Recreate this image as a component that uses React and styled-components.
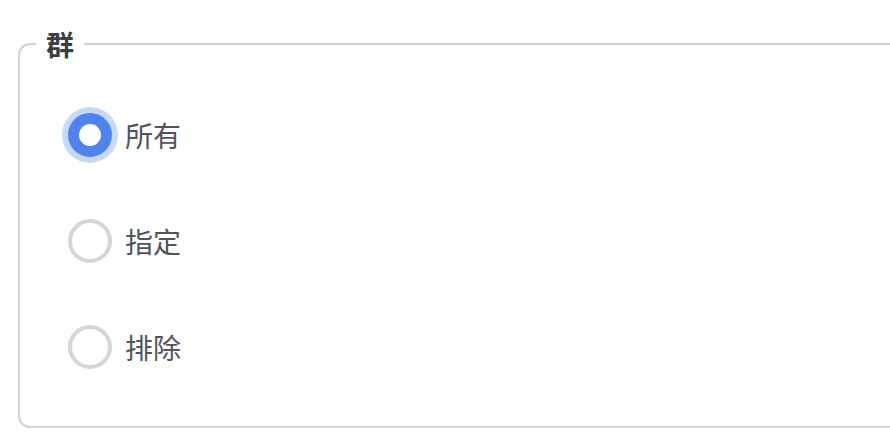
import React, { useState } from 'react';
import styled, { createGlobalStyle } from 'styled-components';

const GlobalStyle = createGlobalStyle`
  html, body {
    margin: 0;
    padding: 0;
    background: #fff;
    font-family: "Noto Sans CJK SC", "Noto Sans", sans-serif;
  }
`;

const Page = styled.div`
  padding: 28px 0 0 18px;
  width: 900px;
`;

const Group = styled.fieldset`
  margin: 0;
  padding: 53px 0 57px 0;
  border: 2px solid #d2d2d2;
  border-right: none;
  border-radius: 12px 0 0 12px;
`;

const Legend = styled.legend`
  margin-left: 16px;
  padding: 0 10px;
  font-size: 28px;
  font-weight: 700;
  line-height: 32px;
  color: #3a3f45;
`;

const List = styled.div`
  display: flex;
  flex-direction: column;
  gap: 62px;
  padding-left: 48px;
`;

const Option = styled.label`
  display: flex;
  align-items: center;
  gap: 13px;
  height: 44px;
  font-size: 28px;
  color: #50555b;
  cursor: pointer;
`;

const Radio = styled.input.attrs({ type: 'radio' })`
  appearance: none;
  margin: 0;
  width: 44px;
  height: 44px;
  box-sizing: border-box;
  border-radius: 50%;
  border: 4px solid #d3d7dc;
  background: #fff;
  cursor: pointer;

  &:checked {
    border: 11px solid #4f84ee;
    box-shadow: 0 0 0 6px #c5dafb;
  }
`;

const options = ['所有', '指定', '排除'];

export default function App() {
  const [value, setValue] = useState('所有');
  return (
    <Page>
      <GlobalStyle />
      <Group>
        <Legend>群</Legend>
        <List>
          {options.map((opt) => (
            <Option key={opt}>
              <Radio name="group" checked={value === opt} onChange={() => setValue(opt)} />
              {opt}
            </Option>
          ))}
        </List>
      </Group>
    </Page>
  );
}
